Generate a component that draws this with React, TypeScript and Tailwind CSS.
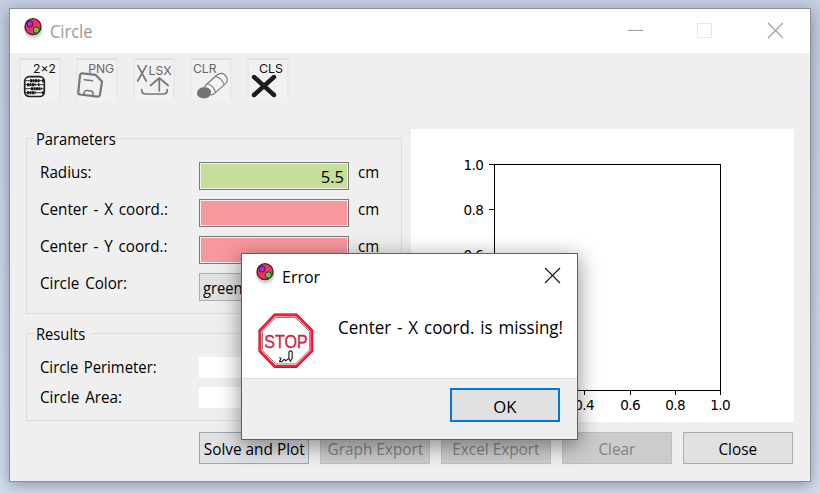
import type { ReactNode } from "react";

const labelText = "inline-block origin-left whitespace-nowrap text-[16px] leading-5";

function AppLogo() {
  return (
    <svg width="24" height="26" viewBox="0 0 24 26" className="shrink-0">
      <ellipse cx="12.5" cy="15" rx="9.5" ry="9" fill="#000" opacity=".06" />
      <ellipse cx="12.3" cy="13" rx="9.2" ry="9" fill="#000" opacity=".12" />
      <circle cx="12" cy="10.7" r="8" fill="#fb2d5f" stroke="#3c2530" strokeWidth="1.3" />
      <circle cx="9" cy="8" r="3.1" fill="#b32bd0" stroke="#3f1a4a" strokeWidth="1" />
      <circle cx="15.3" cy="14" r="3.1" fill="#4ed43c" stroke="#214a1c" strokeWidth="1" />
    </svg>
  );
}

function Tool({ children }: { children: ReactNode }) {
  return (
    <div className="h-[42px] w-[42px] border-2 border-[#e9e9e9] border-t-[#e2e2e2] border-b-[#f2f2f2] bg-[#f1f1f1]">
      <svg width="42" height="42" viewBox="0 0 42 42" className="-m-0.5" fill="none">
        {children}
      </svg>
    </div>
  );
}

const toolFont = "font-['Inter','Liberation_Sans',sans-serif]";

function Toolbar() {
  return (
    <div className="flex h-[85px] gap-[15px] pt-[5px] pl-[9px]">
      <Tool>
        <text x="14" y="15" fontSize="12" textLength="23" lengthAdjust="spacingAndGlyphs" className={toolFont} fill="#111">2×2</text>
        <rect x="5.7" y="18.7" width="19.6" height="19.8" rx="4.5" stroke="#222" strokeWidth="1.7" fill="#f4f4f4" />
        <path d="M6 22.7H25.5M6 26.7H25.5M6 30.7H25.5M6 34.7H25.5" stroke="#333" strokeWidth="1" />
        <path d="M11 22.7H20.5M23 22.7H24.5M8 26.7H16.5M19 26.7H20.5M12 30.7H22.5M8 34.7H16.5M23 34.7H24.5" stroke="#111" strokeWidth="3" strokeDasharray="2 .5" />
      </Tool>
      <Tool>
        <text x="12.2" y="15" fontSize="12.3" textLength="26" lengthAdjust="spacingAndGlyphs" className={toolFont} fill="#666">PNG</text>
        <g stroke="#777" strokeWidth="2.2" strokeLinejoin="round" strokeLinecap="round">
          <path d="M6.4 15.4 19.5 16.8 26 23.5 24 36.4Q23.7 39 21.2 38.6L4.2 36.5Q2 36.1 2.3 33.8L4 17.6Q4.4 15.2 6.4 15.4Z" />
          <path d="M8.2 21.8 16.6 22.8" strokeWidth="1.5" />
          <path d="M7.8 36.5 8.2 34.4Q8.7 32.2 11.2 32.5L15.1 33Q17.4 33.5 17.1 35.8L16.8 37.8" strokeWidth="1.6" />
        </g>
      </Tool>
      <Tool>
        <path d="M5 7.7 13.2 23M13.4 7.7 4.7 23" stroke="#777" strokeWidth="1.7" strokeLinecap="round" />
        <text x="15.5" y="16.7" fontSize="12.3" textLength="23" lengthAdjust="spacingAndGlyphs" className={toolFont} fill="#666">LSX</text>
        <path d="M26.3 33V20.3M17.5 27.5 26.3 20 35.2 27.5M8.7 31.5Q8.5 36 12.5 36H30.5Q34.5 36 34.2 31.5" stroke="#777" strokeWidth="1.7" strokeLinecap="round" strokeLinejoin="round" />
      </Tool>
      <Tool>
        <text x="3" y="15" fontSize="12.3" textLength="23.5" lengthAdjust="spacingAndGlyphs" className={toolFont} fill="#666">CLR</text>
        <g stroke="#777" strokeWidth="1.1">
          <path d="M15.8 27 27 17Q30.5 14.2 34 16.2Q39.3 20.3 36.3 24.8L24 35.8Q21 38 18 35.5L14.8 31.5Q13.8 29 15.8 27Z" fill="#f4f4f4" />
          <path d="M17.2 25.8Q23.5 27.5 25.6 34.3M25.5 18.3Q31.8 20.2 34.2 26.6" />
          <path d="M14.6 29.2C20.5 29.5 22.8 33.5 19.8 37.8C18 40.6 12.5 41.2 9.5 39.3C6.5 37.5 6.3 33.5 8.8 31.2C10.4 29.6 12.6 29 14.6 29.2Z" fill="#737373" stroke="none" />
        </g>
      </Tool>
      <Tool>
        <path d="M7 19 27 37M27 19 7 37" stroke="#1d1d1f" strokeWidth="4.4" strokeLinecap="round" />
        <text x="12" y="15" fontSize="12.3" textLength="24" lengthAdjust="spacingAndGlyphs" className={toolFont} fill="#111">CLS</text>
      </Tool>
    </div>
  );
}

function Field({ label, fill, value }: { label: string; fill: string; value?: string }) {
  return (
    <div className="flex h-7 items-start">
      <div className="flex w-[159px]">
        <span className={`${labelText} scale-x-[0.95] [word-spacing:2px]`}>{label}</span>
      </div>
      <div className="h-7 w-[150px] border border-[#7a7a7a] p-px">
        <div className={`flex h-full justify-end pr-[3px] pt-[2px] ${fill}`}>
          <span className="text-[16.5px] leading-[22px]">{value}</span>
        </div>
      </div>
      <span className={`${labelText} ml-[9px] scale-x-[0.94]`}>cm</span>
    </div>
  );
}

function Group({ title, legendClass, className, children }: { title: string; legendClass: string; className: string; children: ReactNode }) {
  return (
    <div className={`relative w-[376px] border border-[#dcdcdc] pl-[13px] ${className}`}>
      <div className={`absolute -top-[10px] left-[7px] flex h-5 bg-[#efefef] pl-0.5 ${legendClass}`}>
        <span className={`${labelText} scale-x-[0.92]`}>{title}</span>
      </div>
      {children}
    </div>
  );
}

function ResultRow({ label, scale }: { label: string; scale: string }) {
  return (
    <div className="flex h-[21px]">
      <div className="flex w-[159px]">
        <span className={`${labelText} ${scale}`}>{label}</span>
      </div>
      <div className="h-[21px] w-[150px] bg-white" />
    </div>
  );
}

const ticks = [0, 0.2, 0.4, 0.6, 0.8, 1];

function Chart() {
  return (
    <div className="h-[293px] w-[383px] bg-white">
      <svg width="383" height="293" viewBox="0 0 383 293" className="font-['DejaVu_Sans',sans-serif] text-[13.6px]">
        <rect x="83.5" y="35.5" width="226" height="226" fill="none" stroke="#000" />
        {ticks.map((t) => {
          const x = Math.round(83 + t * 226) + 0.5;
          const y = Math.round(261 - t * 226) + 0.5;
          return (
            <g key={t}>
              <path d={`M${x} 261v5M${83} ${y}h-5`} stroke="#000" />
              <text x={x} y="281" textAnchor="middle" textLength="20.5">{t.toFixed(1)}</text>
              <text x="73" y={y + 5} textAnchor="end" textLength="20.5">{t.toFixed(1)}</text>
            </g>
          );
        })}
      </svg>
    </div>
  );
}

function Button({ text, look }: { text: string; look: string }) {
  return (
    <button className={`flex h-8 w-[110px] items-center justify-center border pt-[2px] ${look}`}>
      <span className="inline-block scale-x-[0.93] text-[16.5px] leading-5 whitespace-nowrap">{text}</span>
    </button>
  );
}

const disabled = "border-[#bfbfbf] bg-[#cccccc] text-[#838383]";

function ErrorDialog() {
  return (
    <div className="absolute top-[253px] left-[241px] flex h-[187px] w-[337px] flex-col border border-[#606060] bg-white shadow-[0_5px_20px_1px_rgba(0,0,0,0.42)]">
      <div className="flex h-[43px] items-start pl-[11px]">
        <div className="pt-[7px]"><AppLogo /></div>
        <span className="mt-[11px] ml-[5px] w-[200px] origin-left scale-x-[0.94] text-[17px] leading-6">Error</span>
        <svg width="17" height="17" viewBox="0 0 17 17" className="mt-[13px] mr-[16px] ml-auto shrink-0">
          <path d="M1 1 16 16M16 1 1 16" stroke="#111" strokeWidth="1.1" />
        </svg>
      </div>
      <div className="flex h-[81px] items-start pl-[16px]">
        <svg width="56" height="56" viewBox="0 0 58 58" className="mt-4 shrink-0">
          <path d="M17.5 2.2H39.5L55.5 18.2V39.2L39.5 55.2H17.5L2.2 39.2V18.2Z" fill="#fff" stroke="#8a1224" strokeWidth="3.4" />
          <path d="M17.5 2.2H39.5L55.5 18.2V39.2L39.5 55.2H17.5L2.2 39.2V18.2Z" fill="#fff" stroke="#fa1e39" strokeWidth="2.6" />
          <path d="M18.4 4.6H38.6L53.2 19V38.4L38.6 52.8H18.4L4.6 38.4V19Z" fill="none" stroke="#6d6d6d" strokeWidth=".9" />
          <text x="6.5" y="36" fontSize="19" textLength="45" lengthAdjust="spacingAndGlyphs" fill="#e02440" stroke="#b01f36" strokeWidth=".35" className="font-['Liberation_Sans',sans-serif]">STOP</text>
          <path d="M32 47V40.5Q33.7 38 35.4 40.5V47L33.5 50ZM32 47Q28 50.5 27.8 48.7Q27.8 47 26 49Q24 51.5 23.5 50M23.5 50Q21 51 23.2 48.5Q25 46.3 22 46.5" fill="none" stroke="#222" strokeWidth="1.2" />
        </svg>
        <span className="mt-[18px] ml-[24px] origin-left scale-x-[0.97] text-[17.5px] leading-6 whitespace-nowrap [word-spacing:1.5px]">Center - X coord. is missing!</span>
      </div>
      <div className="flex flex-1 justify-end border-t border-[#dfdfdf] bg-[#efefef] pt-[9px] pr-[17px]">
        <button className="flex h-[34px] w-[110px] items-center justify-center border-2 border-[#0078d7] bg-[#e1e1e1] pt-[4px] text-[17px]">
          <span className="scale-x-[0.98]">OK</span>
        </button>
      </div>
    </div>
  );
}

export default function App() {
  return (
    <div className="relative h-[493px] w-[820px] overflow-hidden bg-linear-to-b from-[#c5cfe1] to-[#d4deed] pt-2 pl-[9px] font-['Open_Sans','Noto_Sans',sans-serif] text-black">
      <div className="flex h-[474px] w-[802px] flex-col border border-[#888d96] bg-[#efefef] shadow-[0_3px_14px_rgba(40,50,75,0.45)]">
        <div className="flex h-11 shrink-0 items-start bg-white pl-[11px]">
          <div className="pt-[7px]"><AppLogo /></div>
          <span className="mt-[10px] ml-[5px] origin-left scale-x-[0.94] text-[17.5px] leading-6 text-[#999]">Circle</span>
          <svg width="156" height="17" viewBox="0 0 156 17" className="mt-[13px] mr-[27px] ml-auto" fill="none">
            <path d="M1 8.5H16" stroke="#999" />
            <path d="M70.5 1.5H84.5V15.5H70.5Z" stroke="#e8e8e8" />
            <path d="M141 1 156 16M156 1 141 16" stroke="#999" strokeWidth="1.1" />
          </svg>
        </div>
        <Toolbar />
        <main className="flex -mt-[9px] h-[293px] shrink-0 pl-4">
          <div className="flex w-[385px] flex-col gap-[19px] pt-[9px]">
            <Group title="Parameters" legendClass="w-[84px]" className="h-[176px] pt-[23px]">
              <div className="flex flex-col gap-[9px]">
                <Field label="Radius:" fill="bg-[#c5df9b]" value="5.5" />
                <Field label="Center - X coord.:" fill="bg-[#f7989d]" />
                <Field label="Center - Y coord.:" fill="bg-[#f7989d]" />
                <div className="flex h-7">
                  <div className="flex w-[159px]">
                    <span className={`${labelText} scale-x-[0.95] [word-spacing:2px]`}>Circle Color:</span>
                  </div>
                  <div className="flex h-7 w-[150px] border border-[#adadad] bg-[#e1e1e1] pt-[4px] pl-[3px]">
                    <span className={`${labelText} scale-x-[0.92]`}>green</span>
                  </div>
                </div>
              </div>
            </Group>
            <Group title="Results" legendClass="w-[57px]" className="h-[88px] pt-[23px]">
              <div className="flex flex-col gap-[9px]">
                <ResultRow label="Circle Perimeter:" scale="scale-x-[0.93] [word-spacing:1.5px]" />
                <ResultRow label="Circle Area:" scale="scale-x-[0.95] [word-spacing:2px]" />
              </div>
            </Group>
          </div>
          <Chart />
        </main>
        <footer className="flex gap-[11px] pt-[10px] pl-[189px]">
          <Button text="Solve and Plot" look="border-[#a0a6aa] bg-[#dfe2e5]" />
          <Button text="Graph Export" look={disabled} />
          <Button text="Excel Export" look={disabled} />
          <Button text="Clear" look={disabled} />
          <Button text="Close" look="border-[#adadad] bg-[#e1e1e1]" />
        </footer>
      </div>
      <ErrorDialog />
    </div>
  );
}
